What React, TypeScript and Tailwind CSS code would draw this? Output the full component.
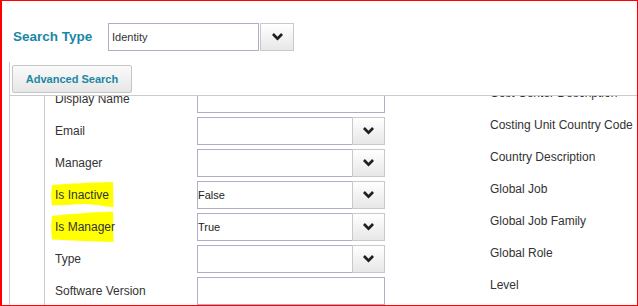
import type { ReactNode } from "react";

const teal = "text-[#1a87a6]";

function Chevron() {
  return (
    <svg width="11" height="8" viewBox="0 0 11 8" className="block">
      <path d="M0 2 L1.9 0.1 L5.5 3.7 L9.1 0.1 L11 2 L5.5 7.6 Z" fill="#1f1f1f" />
    </svg>
  );
}

function DropButton({ className = "" }: { className?: string }) {
  return (
    <div
      className={`flex h-[28px] shrink-0 items-center justify-center border border-[#c9c9c9] bg-linear-to-b from-white to-[#e7e7e7] ${className}`}
    >
      <Chevron />
    </div>
  );
}

function TextBox({ value }: { value?: string }) {
  return (
    <div className="flex h-[28px] w-[188px] items-center border border-[#adafc6] bg-white text-[11px] text-[#222]">
      {value}
    </div>
  );
}

function Select({ value }: { value?: string }) {
  return (
    <div className="flex h-[28px] w-[188px]">
      <div className="flex flex-1 items-center border border-r-0 border-[#adafc6] bg-white text-[11px] text-[#222]">
        {value}
      </div>
      <DropButton className="w-[33px]" />
    </div>
  );
}

// marker strokes drawn over the screenshot, one per highlighted label
const marks: Record<number, string> = {
  1: "M1 6 C18 4.5 42 3.5 62 3 L62.5 28 C52 27.5 42 24.5 31 25 C20 25.5 10 26.5 1 26.5 C0 20 0 12 1 6 Z",
  2: "M1 5 C16 3 40 1.5 62 0.5 L62.5 31 C42 30.5 22 29.5 1 28.5 C0 20 0 12 1 5 Z",
};

type Row = { label: string; kind: "text" | "select"; value?: string; mark?: number };

const leftRows: Row[] = [
  { label: "Display Name", kind: "text" },
  { label: "Email", kind: "select" },
  { label: "Manager", kind: "select" },
  { label: "Is Inactive", kind: "select", value: "False", mark: 1 },
  { label: "Is Manager", kind: "select", value: "True", mark: 2 },
  { label: "Type", kind: "select" },
  { label: "Software Version", kind: "text" },
];

const rightRows = [
  "Cost Center Description",
  "Costing Unit Country Code",
  "Country Description",
  "Global Job",
  "Global Job Family",
  "Global Role",
  "Level",
];

function Label({ children, mark }: { children: ReactNode; mark?: number }) {
  return (
    <div className="relative flex h-full w-[142px] shrink-0 items-center">
      {mark && (
        <svg
          width="64"
          height="32"
          viewBox="0 0 64 32"
          className="absolute top-0 left-[-4px]"
        >
          <path d={marks[mark]} fill="#ffff00" />
        </svg>
      )}
      <span className="relative text-[12px] text-[#333]">{children}</span>
    </div>
  );
}

export default function App() {
  return (
    <div className="flex h-[306px] w-[638px] flex-col overflow-hidden border border-l-2 border-[#ff0000] bg-white font-['Liberation_Sans',Arial,sans-serif]">
      <div className="mt-[22px] flex items-center pl-[11px]">
        <div className={`w-[95px] text-[13.5px] font-bold ${teal}`}>Search Type</div>
        <div className="flex h-[28px] w-[151px] items-center border border-[#adafc6] pl-[3px] text-[11px] text-[#333]">
          Identity
        </div>
        <DropButton className="ml-px w-[34px]" />
      </div>

      <div className="mt-[11px] ml-[7px] flex min-h-0 flex-1 flex-col border-l border-[#cbcbcb]">
        <div className="border-b border-[#cbcbcb] pt-[3px] pb-[2px] pl-[2px]">
          <button
            className={`h-[28px] w-[120px] rounded-[2px] border border-[#c6c6c6] bg-linear-to-b from-[#fbfbfb] to-[#e6e6e6] text-[11px] font-bold ${teal}`}
          >
            Advanced Search
          </button>
        </div>

        <div className="min-h-0 flex-1 overflow-hidden">
          <div className="ml-[34px] flex h-full border-l border-[#cbcbcb] pl-[10px]">
            <div className="mt-[-13px] w-[330px] shrink-0">
              {leftRows.map((r) => (
                <div key={r.label} className="flex h-[32px] items-center">
                  <Label mark={r.mark}>{r.label}</Label>
                  {r.kind === "text" ? <TextBox value={r.value} /> : <Select value={r.value} />}
                </div>
              ))}
            </div>
            <div className="mt-[-19px] ml-[105px] min-w-0 whitespace-nowrap">
              {rightRows.map((label) => (
                <div key={label} className="flex h-[32px] items-center text-[12px] text-[#333]">
                  {label}
                </div>
              ))}
            </div>
          </div>
        </div>
      </div>
    </div>
  );
}
